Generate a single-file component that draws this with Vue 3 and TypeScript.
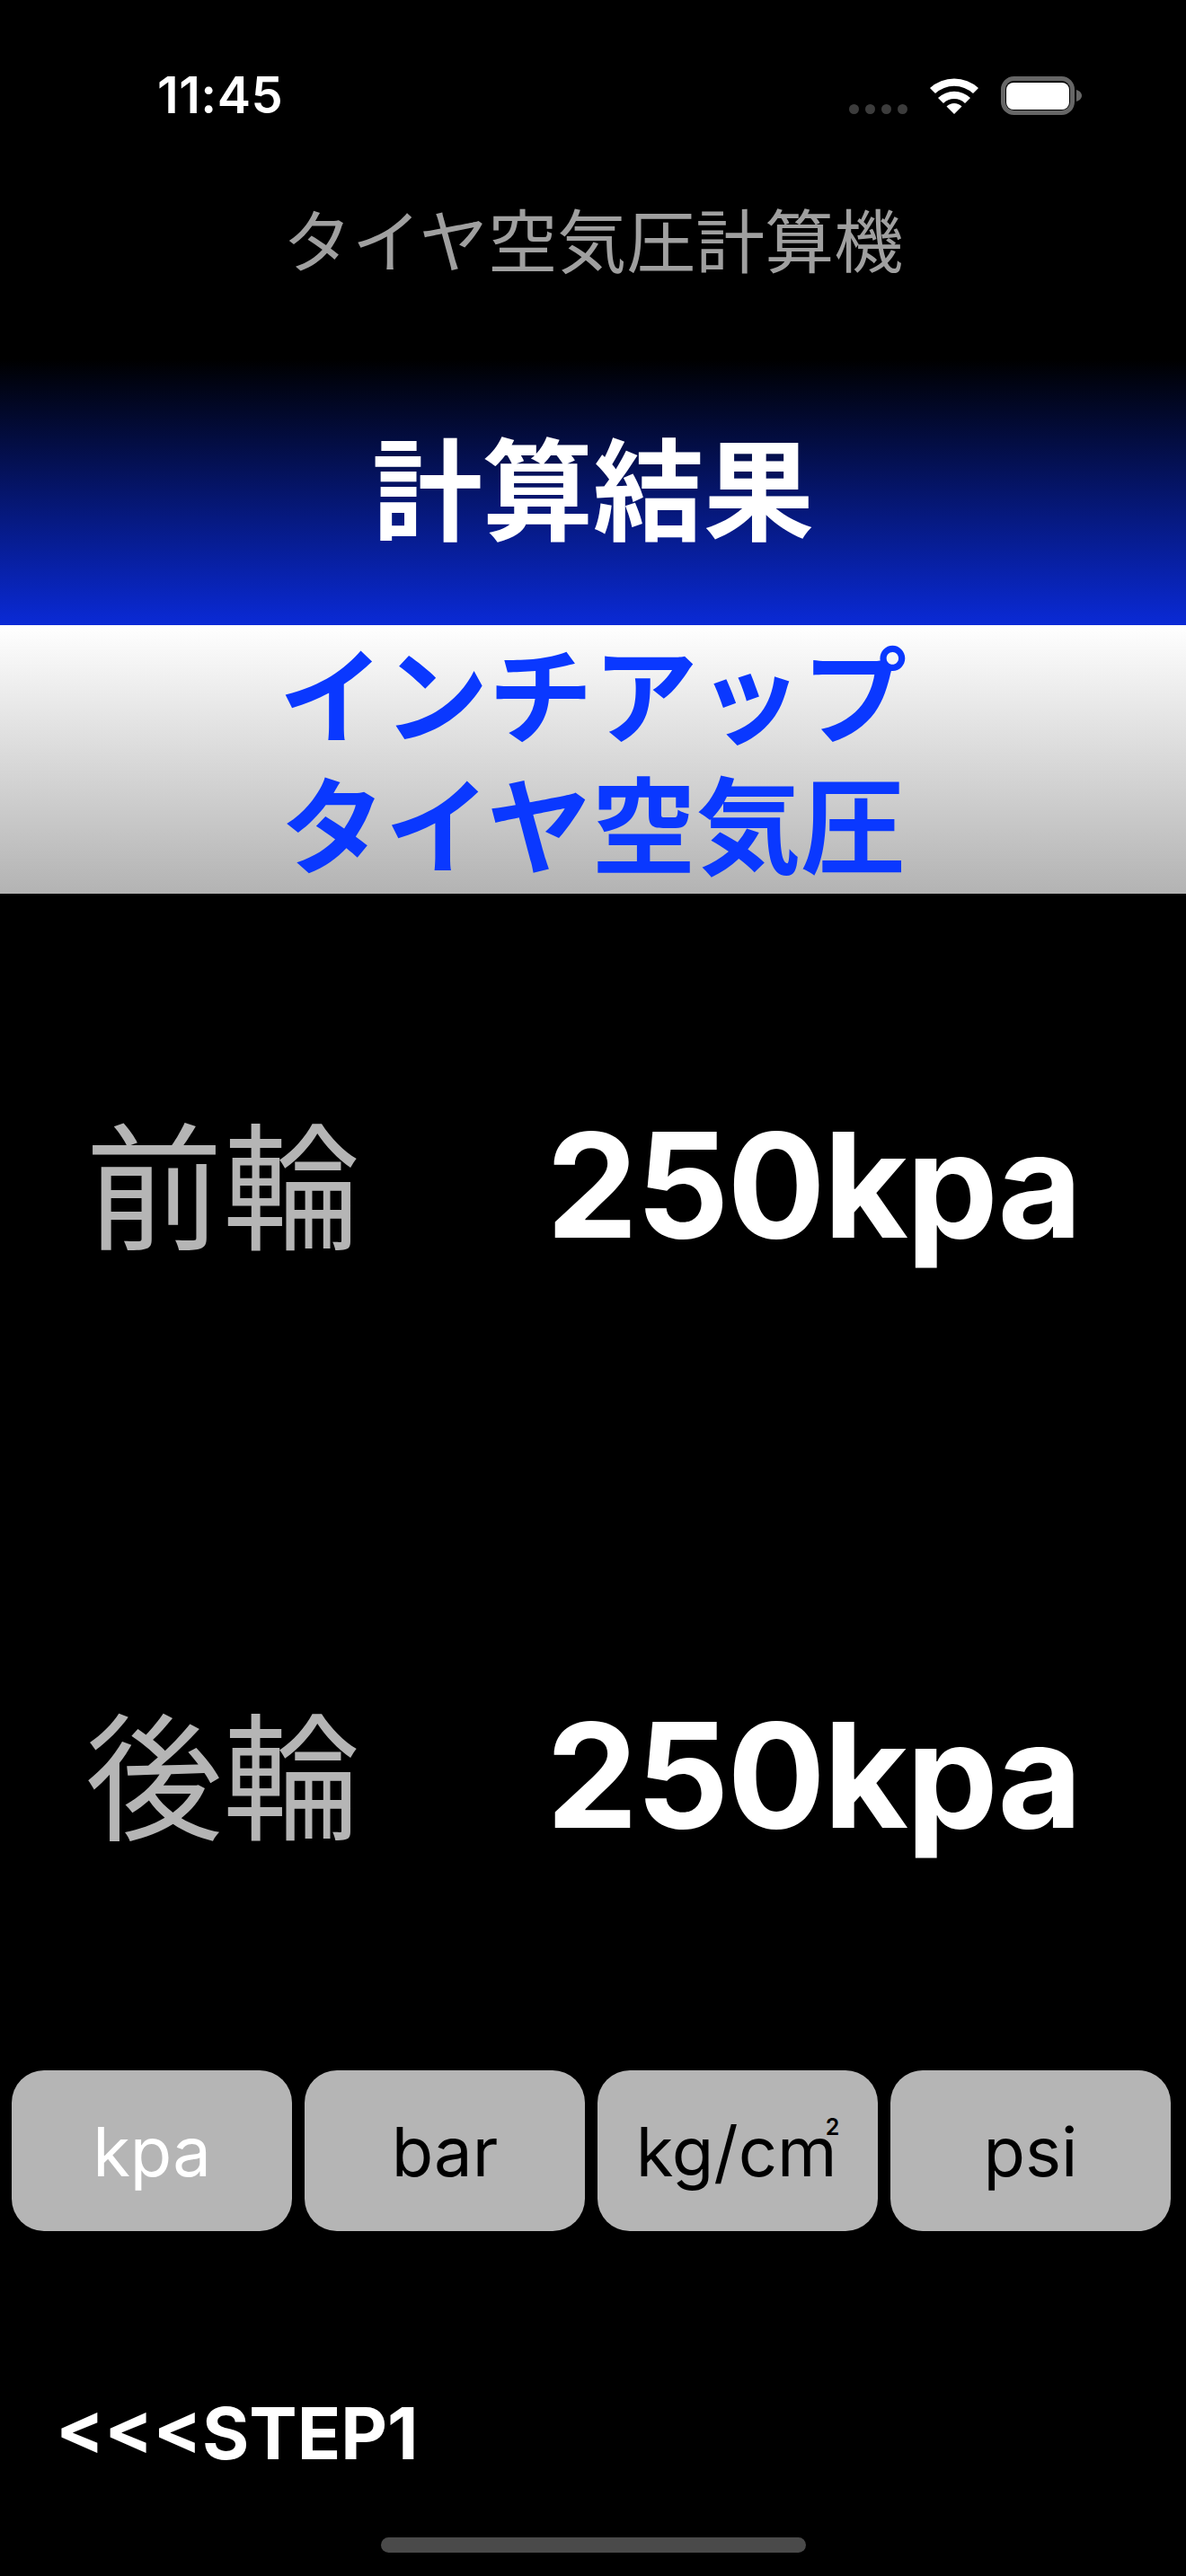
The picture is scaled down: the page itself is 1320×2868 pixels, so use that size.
<script setup lang="ts">
const units: { label: string; active: boolean }[] = [
  { label: 'kpa', active: true },
  { label: 'bar', active: false },
  { label: 'kg/cm', active: false },
  { label: 'psi', active: false },
]
const rows = [
  { label: '前輪', value: '250kpa' },
  { label: '後輪', value: '250kpa' },
]
</script>

<template>
  <div class="screen">
    <header class="status">
      <span class="time">11:45</span>
      <div class="status-icons">
        <div class="dots"><i></i><i></i><i></i><i></i></div>
        <svg class="wifi" width="54" height="40" viewBox="0 0 54 40">
          <path fill="#fff" d="M0 11A40 40 0 0 1 54 11L48 17A31 31 0 0 0 6 17Z" />
          <path fill="#fff" d="M9 22A26 26 0 0 1 45 22L39 28A17 17 0 0 0 15 28Z" />
          <path fill="#fff" d="M18.5 31.5A12 12 0 0 1 35.5 31.5L27 40Z" />
        </svg>
        <svg class="battery" width="90" height="43" viewBox="0 0 90 43">
          <rect x="2.5" y="2.5" width="77" height="38" rx="12" fill="none" stroke="#666" stroke-width="5" />
          <rect x="6" y="7" width="70" height="30" rx="8" fill="#fff" />
          <path fill="#666" d="M84 15c3 1 6 3 6 6.500s-3 5.500-6 6.500Z" />
        </svg>
      </div>
    </header>

    <h1 class="title">タイヤ空気圧計算機</h1>

    <section class="banner"><span class="banner-text">計算結果</span></section>
    <section class="subhead">インチアップ<br />タイヤ空気圧</section>

    <main class="results">
      <div v-for="row in rows" :key="row.label" class="row">
        <span class="row-label">{{ row.label }}</span>
        <span class="row-value">{{ row.value }}</span>
      </div>
    </main>

    <nav class="units">
      <button v-for="u in units" :key="u.label" class="unit" :class="{ active: u.active }">
        {{ u.label }}<sup v-if="u.label === 'kg/cm'" class="sq">2</sup>
      </button>
    </nav>

    <footer class="footer">
      <span class="back">&lt;&lt;&lt;STEP1</span>
      <div class="home-bar"></div>
    </footer>
  </div>
</template>

<style>
html,
body {
  margin: 0;
  background: #000;
}
</style>

<style scoped>
.screen {
  width: 1320px;
  height: 2868px;
  background: #000;
  display: flex;
  flex-direction: column;
  overflow: hidden;
  font-family: Inter, "Noto Sans CJK JP", sans-serif;
}
.status {
  height: 128px;
  padding: 85px 116px 0 175px;
  box-sizing: border-box;
  display: flex;
  justify-content: space-between;
  align-items: flex-end;
  flex: none;
}
.time {
  color: #fff;
  font-size: 56px;
  font-weight: 600;
  line-height: 43px;
  padding-top: 2px;
  letter-spacing: 0.5px;
}
.status-icons {
  display: flex;
  align-items: flex-end;
  gap: 25px;
}
.dots {
  display: flex;
  gap: 7px;
  padding-bottom: 1px;
}
.dots i {
  width: 11px;
  height: 11px;
  border-radius: 50%;
  background: #3c3c3c;
}
.wifi {
  display: block;
  margin-bottom: 1px;
}
.battery {
  display: block;
}
.title {
  margin: 0;
  height: 272px;
  box-sizing: border-box;
  display: flex;
  align-items: center;
  justify-content: center;
  color: #a0a0a0;
  font-size: 77px;
  line-height: 1;
  font-weight: 400;
  flex: none;
  font-family: "Noto Sans CJK JP", sans-serif;
}
.banner {
  height: 296px;
  flex: none;
  box-sizing: border-box;
  padding-bottom: 20px;
  display: flex;
  align-items: center;
  justify-content: center;
  background: linear-gradient(to bottom, #000 0%, #0a2ad6 100%);
  color: #fff;
  font-size: 123px;
  line-height: 1;
  font-weight: 700;
  font-family: "Noto Sans CJK JP", sans-serif;
}
.subhead {
  height: 299px;
  flex: none;
  text-align: center;
  background: linear-gradient(to bottom, #fff 0%, #b3b3b3 100%);
  color: #0a38ff;
  font-size: 116.5px;
  line-height: 145px;
  font-weight: 700;
  font-family: "Noto Sans CJK JP", sans-serif;
}
.results {
  height: 1310px;
  flex: none;
  box-sizing: border-box;
  padding-top: 215px;
  display: flex;
  flex-direction: column;
  gap: 440px;
}
.row {
  height: 217px;
  display: flex;
  align-items: center;
  padding-left: 95px;
}
.row-label {
  width: 513px;
  flex: none;
  color: #b5b5b5;
  font-size: 153px;
  line-height: 1;
  padding-bottom: 10px;
  font-family: "Noto Sans CJK JP", sans-serif;
}
.row-value {
  color: #fff;
  font-size: 162px;
  line-height: 1;
  font-weight: 700;
  letter-spacing: -2px;
}
.units {
  height: 179px;
  flex: none;
  box-sizing: border-box;
  padding: 0 17px 0 13px;
  display: grid;
  grid-template-columns: repeat(4, 1fr);
  gap: 14px;
}
.unit {
  border: none;
  border-radius: 36px;
  background: #b5b5b5;
  color: #000;
  font-family: Inter, sans-serif;
  font-size: 76px;
  font-weight: 400;
  padding: 0;
  white-space: nowrap;
}
.unit.active {
  color: #fff;
}
.sq {
  font-size: 25px;
  font-weight: 600;
  line-height: 0;
  vertical-align: 46px;
  margin-left: -13px;
}
.footer {
  flex: 1;
  padding-top: 175px;
  padding-left: 62px;
  display: flex;
  flex-direction: column;
}
.back {
  color: #fff;
  font-size: 80px;
  font-weight: 700;
  line-height: 100px;
}
.home-bar {
  align-self: center;
  width: 473px;
  height: 17px;
  margin-top: 66px;
  margin-left: -62px;
  border-radius: 9px;
  background: #4a4a4a;
}
</style>
